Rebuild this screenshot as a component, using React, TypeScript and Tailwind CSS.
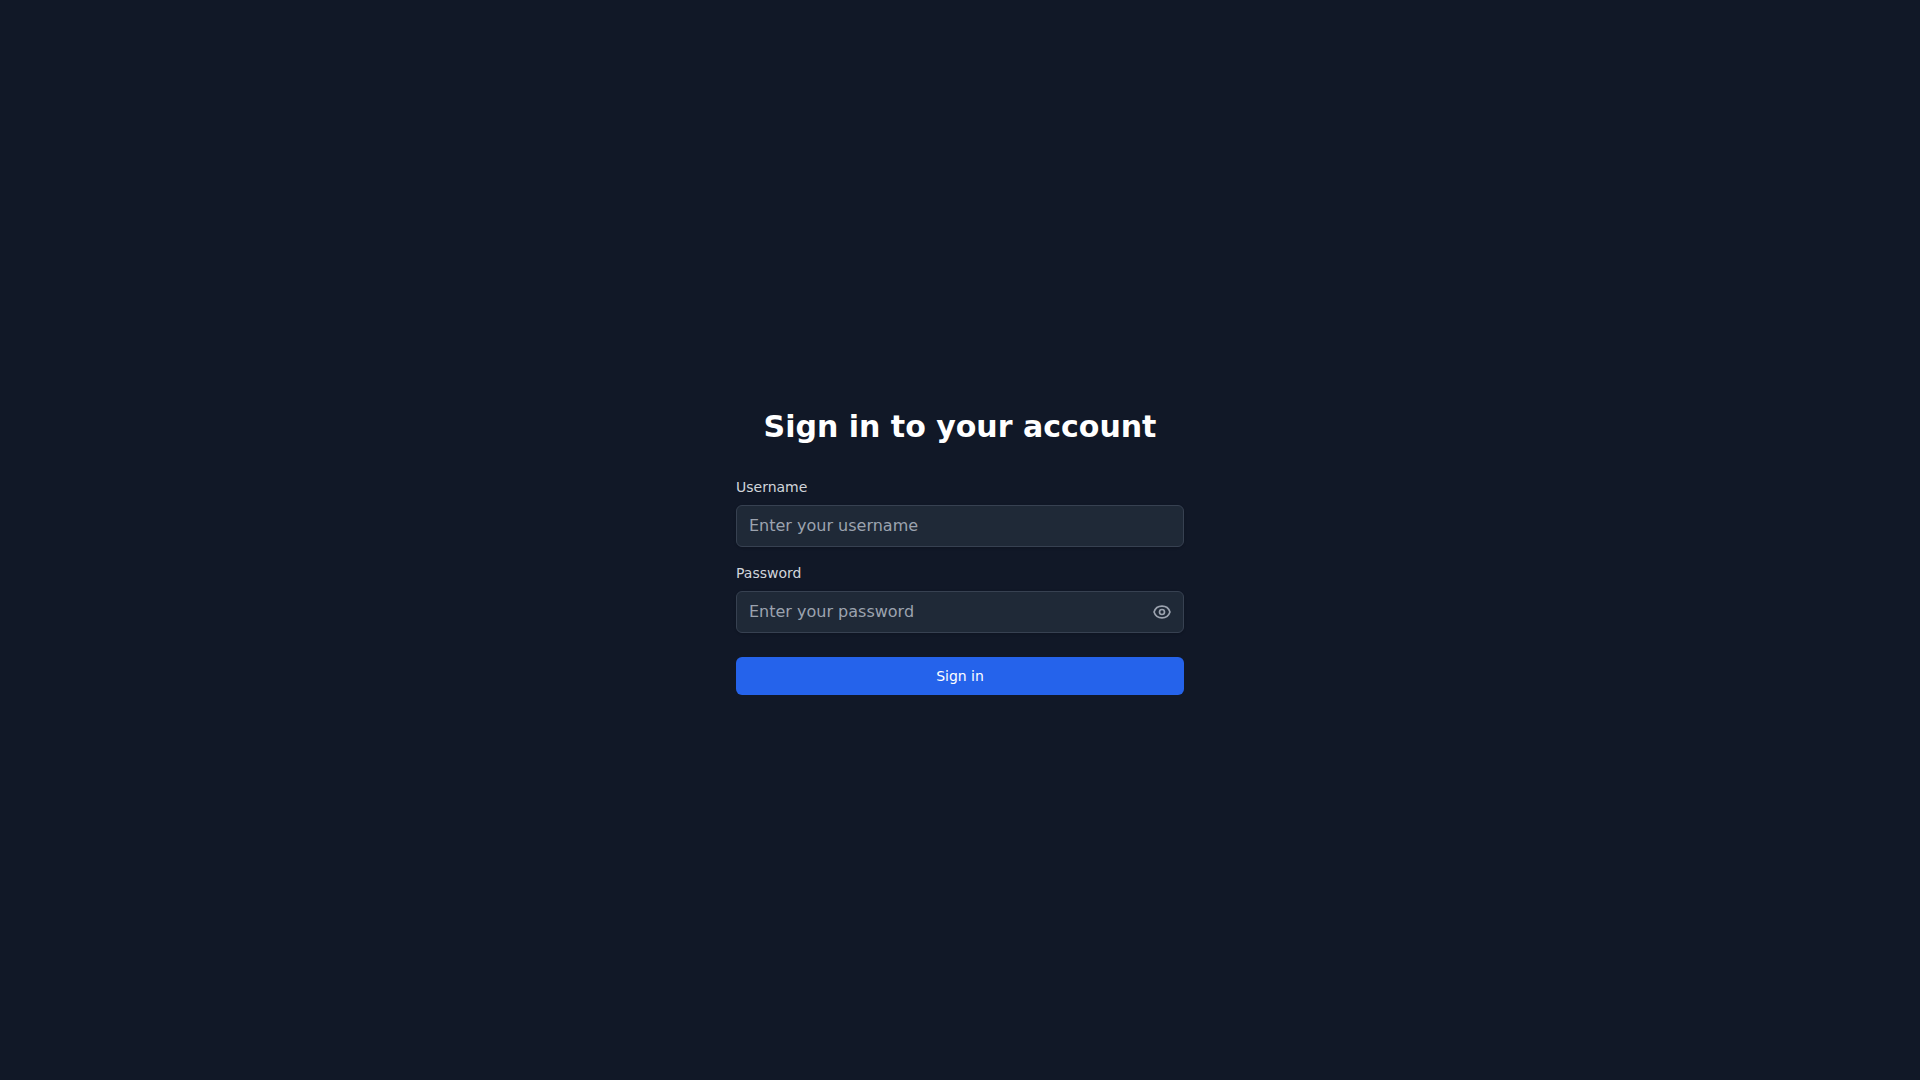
import { useState } from "react";
import { EyeOff } from "lucide-react";

const labelClassName = "block text-sm font-medium text-[#d1d5db]";
const inputClassName =
  "block w-full rounded-md border border-[#374151] bg-[#1f2937] px-3 py-2 text-base text-white placeholder-[#9ca3af] shadow-sm focus:border-[#3b82f6] focus:outline-none";

function EyeGlyph() {
  return (
    <svg aria-hidden="true" className="size-5" fill="none" stroke="currentColor" strokeLinecap="round" strokeLinejoin="round" strokeWidth={2} viewBox="0 0 24 24">
      <path d="M15 12a3 3 0 11-6 0 3 3 0 016 0z" />
      <path d="M2.458 12C3.732 7.943 7.523 5 12 5c4.478 0 8.268 2.943 9.542 7-1.274 4.057-5.064 7-9.542 7-4.477 0-8.268-2.943-9.542-7z" />
    </svg>
  );
}

export default function App() {
  const [username, setUsername] = useState("");
  const [password, setPassword] = useState("");
  const [showPassword, setShowPassword] = useState(false);

  return (
    <div className="flex min-h-screen items-center justify-center bg-[#111827] px-4 font-['DejaVu_Sans',sans-serif]">
      <main className="w-full max-w-md pt-6">
        <h1 className="text-center text-3xl font-bold text-white">Sign in to your account</h1>
        <form className="mt-8" onSubmit={(event) => event.preventDefault()}>
          <div className="space-y-4">
            <div>
              <label className={labelClassName} htmlFor="username">Username</label>
              <input
                className={`mt-2 ${inputClassName}`}
                id="username"
                placeholder="Enter your username"
                type="text"
                value={username}
                onChange={(event) => setUsername(event.target.value)}
              />
            </div>
            <div>
              <label className={labelClassName} htmlFor="password">Password</label>
              <div className="relative mt-2">
                <input
                  className={`pr-10 ${inputClassName}`}
                  id="password"
                  placeholder="Enter your password"
                  type={showPassword ? "text" : "password"}
                  value={password}
                  onChange={(event) => setPassword(event.target.value)}
                />
                <button
                  aria-label={showPassword ? "Hide password" : "Show password"}
                  className="absolute inset-y-0 right-0 flex items-center pr-3 text-[#9ca3af] hover:text-[#d1d5db]"
                  type="button"
                  onClick={() => setShowPassword(!showPassword)}
                >
                  {showPassword ? <EyeOff className="size-5" /> : <EyeGlyph />}
                </button>
              </div>
            </div>
          </div>
          <button className="mt-6 flex w-full justify-center rounded-md border border-transparent bg-[#2563eb] px-4 py-2 text-sm font-medium text-white hover:bg-[#1d4ed8]" type="submit">
            Sign in
          </button>
        </form>
      </main>
    </div>
  );
}
